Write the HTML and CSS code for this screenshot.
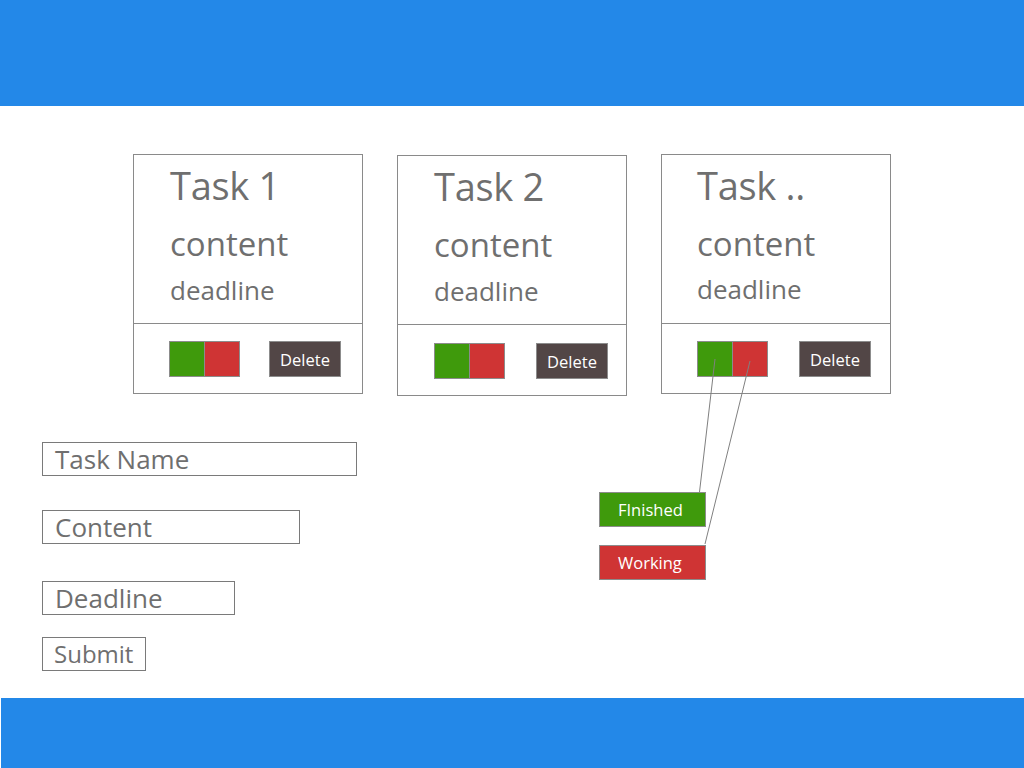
FILE: index.html
```html
<!DOCTYPE html>
<html lang="en">
<head>
<meta charset="utf-8">
<title>Tasks</title>
<link rel="stylesheet" href="styles.css">
</head>
<body>
<div class="page">
  <header class="topbar"></header>
  <main class="main">
    <section class="cards">
      <article class="card card-1">
        <div class="card-body">
          <div class="task-title">Task 1</div>
          <div class="task-content">content</div>
          <div class="task-deadline">deadline</div>
        </div>
        <div class="card-actions">
          <div class="status"><span class="st st-done"></span><span class="st st-work"></span></div>
          <button class="delete">Delete</button>
        </div>
      </article>
      <article class="card card-2">
        <div class="card-body">
          <div class="task-title">Task 2</div>
          <div class="task-content">content</div>
          <div class="task-deadline">deadline</div>
        </div>
        <div class="card-actions">
          <div class="status"><span class="st st-done"></span><span class="st st-work"></span></div>
          <button class="delete">Delete</button>
        </div>
      </article>
      <article class="card card-3">
        <div class="card-body">
          <div class="task-title">Task ..</div>
          <div class="task-content">content</div>
          <div class="task-deadline">deadline</div>
        </div>
        <div class="card-actions">
          <div class="status"><span class="st st-done"></span><span class="st st-work"></span></div>
          <button class="delete">Delete</button>
        </div>
      </article>
    </section>

    <form class="task-form">
      <div class="field field-name">Task Name</div>
      <div class="field field-content">Content</div>
      <div class="field field-deadline">Deadline</div>
      <div class="field field-submit">Submit</div>
    </form>

    <svg class="callout-lines" width="1024" height="592" viewBox="0 106 1024 592" aria-hidden="true">
      <line x1="715" y1="359" x2="699.5" y2="492" stroke="#808080" stroke-width="1"/>
      <line x1="750" y1="361" x2="705" y2="544" stroke="#808080" stroke-width="1"/>
    </svg>
    <div class="legend">
      <div class="legend-item legend-done">FInished</div>
      <div class="legend-item legend-work">Working</div>
    </div>
  </main>
  <footer class="bottombar"></footer>
</div>
</body>
</html>
```

FILE: styles.css
```css
* { box-sizing: border-box; }
html, body { margin: 0; padding: 0; }
body {
  font-family: "Open Sans", "Noto Sans", sans-serif;
  color: #6f6f6f;
  background: #fff;
}
.page {
  width: 1024px;
  height: 768px;
  display: flex;
  flex-direction: column;
  overflow: hidden;
}
.topbar {
  height: 106px;
  background: #2388e8;
  flex: none;
}
.main {
  position: relative;
  height: 592px;
  flex: none;
}
.bottombar {
  height: 70px;
  margin-left: 1px;
  background: #2388e8;
  flex: none;
}

/* cards */
.cards {
  display: flex;
  gap: 34px;
  padding: 48px 0 0 133px;
  align-items: flex-start;
}
.card {
  width: 230px;
  height: 240px;
  border: 1px solid #8a8a8a;
  display: flex;
  flex-direction: column;
}
.card-2 { margin-top: 1px; height: 241px; }
.card-body {
  height: 169px;
  border-bottom: 1px solid #8a8a8a;
  padding-left: 36px;
}
.card-3 .card-body { padding-left: 35px; }
.task-title {
  font-size: 38px;
  line-height: 1;
  margin-top: 11px;
  letter-spacing: -0.3px;
}
.task-content {
  font-size: 33px;
  line-height: 1;
  margin-top: 23px;
}
.task-deadline {
  font-size: 26px;
  line-height: 1;
  margin-top: 17px;
}
.card-3 .task-deadline { margin-top: 16px; }
.card-actions {
  display: flex;
  align-items: flex-start;
  padding: 17px 0 0 35px;
}
.card-2 .card-actions { padding-top: 18px; padding-left: 36px; }
.status { display: flex; }
.st {
  width: 36px;
  height: 36px;
  border: 1px solid #8c8c8c;
}
.st-done { background: #3f9a0c; }
.st-work { background: #cf3434; margin-left: -1px; }
.delete {
  margin-left: 29px;
  width: 72px;
  height: 36px;
  padding: 0;
  border: 1px solid #8c8c8c;
  background: #524646;
  color: #fff;
  font-family: "Open Sans", "Noto Sans", sans-serif;
  font-size: 16.5px;
}
.card-2 .delete { margin-left: 31px; }
.card-3 .delete { margin-left: 31px; }

/* form */
.task-form {
  display: flex;
  flex-direction: column;
  align-items: flex-start;
  padding: 46px 0 0 42px;
}
.field {
  height: 34px;
  border: 1px solid #7a7a7a;
  font-size: 26px;
  line-height: 32px;
  padding-left: 12px;
  color: #6f6f6f;
}
.field-name { width: 315px; }
.field-content { width: 258px; margin-top: 34px; }
.field-deadline { width: 193px; margin-top: 37px; }
.field-submit { width: 104px; margin-top: 22px; padding-left: 11px; font-size: 24px; }

/* callout legend */
.callout-lines {
  position: absolute;
  left: 0;
  top: 0;
}
.legend {
  position: absolute;
  left: 599px;
  top: 386px;
  display: flex;
  flex-direction: column;
  gap: 18px;
}
.legend-item {
  width: 107px;
  height: 35px;
  border: 1px solid #8c8c8c;
  color: #fff;
  font-size: 16.5px;
  line-height: 33px;
  padding-left: 18px;
}
.legend-done { background: #3f9a0c; }
.legend-work { background: #cf3434; }
```
